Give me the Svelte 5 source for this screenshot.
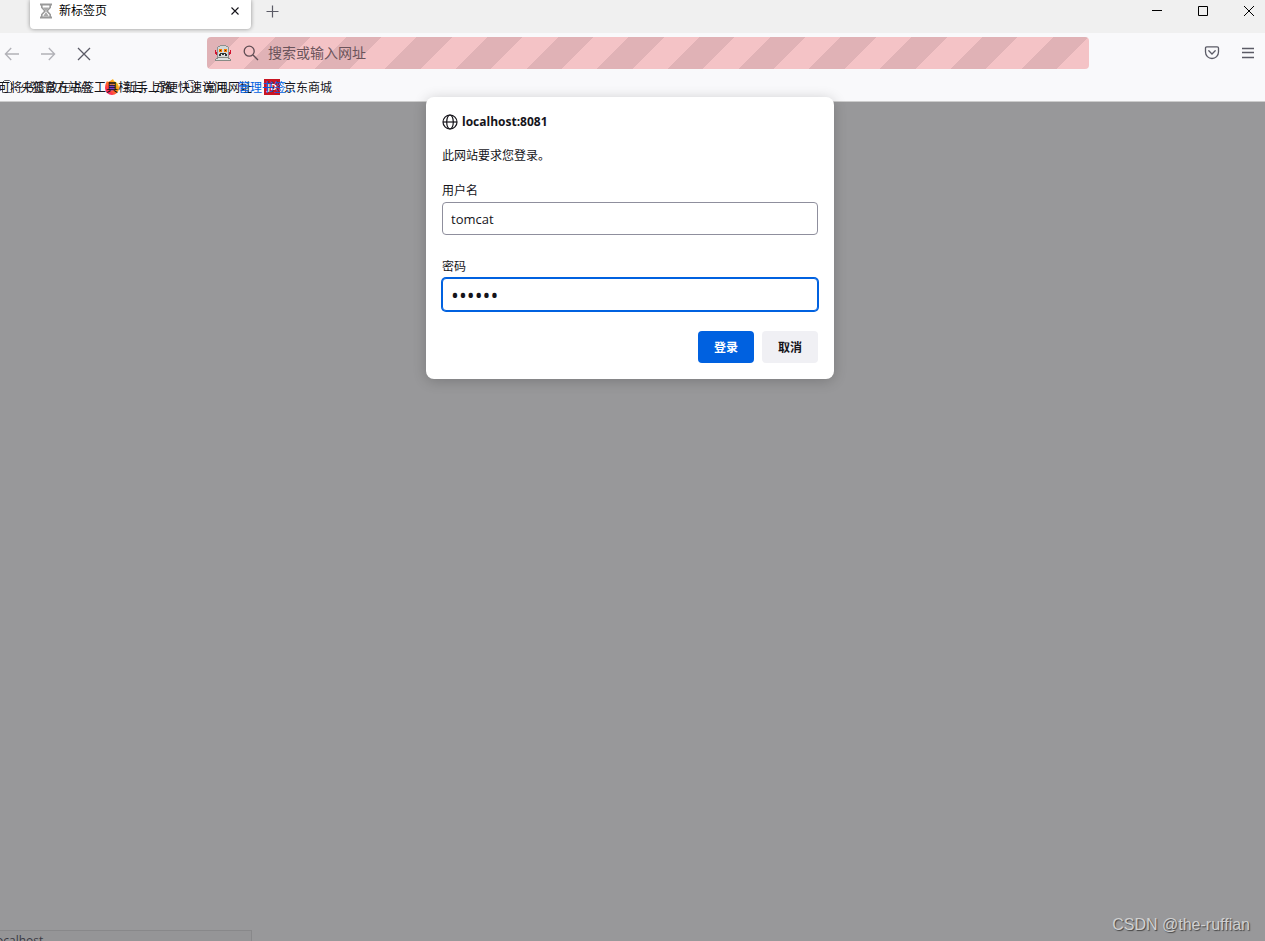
<script>
	let username = 'tomcat';
	let password = 'tomcat';

	function handleSubmit(event) {
		event.preventDefault();
	}
</script>

<div class="browser">
	<header class="tab-strip">
		<div class="tab">
			<svg class="tab-icon" width="14" height="16" viewBox="0 0 14 16">
				<path d="M1 1.5h12M1 14.5h12" stroke="#999" stroke-width="2" />
				<path d="M2.8 2v2.5L6 8l-3.2 3.5V14M11.2 2v2.5L8 8l3.2 3.5V14" fill="none" stroke="#999" stroke-width="1.6" />
				<path d="M4 4.5h6L7 8zM7 9l3 4.5H4z" fill="#aaa" />
			</svg>
			<span class="tab-title">新标签页</span>
			<button class="tab-close" aria-label="关闭标签页">
				<svg width="10" height="10" viewBox="0 0 10 10">
					<path d="M1.5 1.5l7 7M8.5 1.5l-7 7" stroke="#15141a" stroke-width="1.1" />
				</svg>
			</button>
		</div>
		<button class="new-tab" aria-label="打开新标签页">
			<svg width="13" height="13" viewBox="0 0 13 13">
				<path d="M6.5 .5v12M.5 6.5h12" stroke="#5b5b66" stroke-width="1.2" />
			</svg>
		</button>
		<div class="window-controls">
			<button aria-label="最小化">
				<svg width="10" height="10" viewBox="0 0 10 10"><path d="M0 4.5h10" stroke="#000" /></svg>
			</button>
			<button aria-label="最大化">
				<svg width="10" height="10" viewBox="0 0 10 10"><path d="M.5 .5h9v9h-9z" fill="none" stroke="#000" /></svg>
			</button>
			<button aria-label="关闭">
				<svg width="10" height="10" viewBox="0 0 10 10"><path d="M0 0l10 10M10 0L0 10" stroke="#000" /></svg>
			</button>
		</div>
	</header>

	<nav class="toolbar">
		<button class="tool nav faded" aria-label="后退">
			<svg width="16" height="16" viewBox="0 0 16 16"><path d="M15 8H1.5M7.2 2L1.4 8l5.8 6" /></svg>
		</button>
		<button class="tool nav faded" aria-label="前进">
			<svg width="16" height="16" viewBox="0 0 16 16"><path d="M1 8h13.5M8.8 2l5.8 6-5.8 6" /></svg>
		</button>
		<button class="tool nav" aria-label="停止">
			<svg width="16" height="16" viewBox="0 0 16 16"><path d="M2 2l12 12M14 2L2 14" /></svg>
		</button>
		<div class="spring"></div>
		<div class="url-bar">
			<svg class="robot" width="16" height="16" viewBox="0 0 16 16" shape-rendering="crispEdges">
				<path d="M5 0h6v1h2v1h1v10H2V2h1V1h2z" fill="#8b8f90" />
				<path d="M5 1h6v1h2v10H3V2h2z" fill="#d3d7d7" />
				<path d="M4 4h3v3H4zM9 4h3v3H9z" fill="#f57900" />
				<path d="M5 5h1v1H5zM10 5h1v1h-1z" fill="#4b2408" />
				<path d="M5 8h6v1h1v2h-2v-1H6v1H4V9h1z" fill="#2e3436" />
				<path d="M6 9h1v1H6zM9 9h1v1H9z" fill="#eee" />
				<path d="M0 5h1v2h1v3H1V9H0zM15 5h1v4h-1v1h-1V7h1z" fill="#d3122e" />
				<path d="M2 12h12v1h1v1h1v2H0v-2h1v-1h1z" fill="#888a85" />
				<path d="M3 13h10v1H3zM1 14h14v1H1z" fill="#dce0e0" />
			</svg>
			<svg class="search-icon" width="16" height="16" viewBox="0 0 16 16">
				<circle cx="6.2" cy="6.2" r="5" />
				<path d="M10 10l5 5" />
			</svg>
			<input type="text" aria-label="搜索或输入网址" placeholder="搜索或输入网址" />
		</div>
		<div class="spring"></div>
		<button class="tool" aria-label="保存到 Pocket">
			<svg width="16" height="16" viewBox="0 0 16 16">
				<path d="M2.8 1.8h10.4q1.3 0 1.3 1.3V7a6.5 6.5 0 0 1-13 0V3.1q0-1.3 1.3-1.3z" />
				<path d="M4.8 5.8L8 9l3.2-3.2" stroke-linecap="round" />
			</svg>
		</button>
		<button class="tool" aria-label="应用程序菜单">
			<svg width="16" height="16" viewBox="0 0 16 16"><path d="M2 3.5h12M2 7.5h12M2 12.5h12" /></svg>
		</button>
	</nav>

	<div class="bookmarks">
		<!-- the empty-toolbar hint and the bookmarks share one cell -->
		<div class="items">
			<a href="#mozilla" class="bookmark">
				<svg width="16" height="16" viewBox="0 0 16 16">
					<path d="M2.5 13.5v-10l2-2h5l2 2v10z" fill="none" stroke="#5b5b66" />
				</svg>
				<span class="name">火狐官方站点</span>
			</a>
			<a href="#start" class="bookmark">
				<svg width="16" height="16" viewBox="0 0 16 16">
					<defs>
						<linearGradient id="fox" x1="1" y1="0" x2="0" y2="1">
							<stop offset="0" stop-color="#ffe226" />
							<stop offset=".45" stop-color="#ff8a16" />
							<stop offset=".75" stop-color="#ff3050" />
							<stop offset="1" stop-color="#d81b9a" />
						</linearGradient>
					</defs>
					<path d="M2 4l1-2 1 1 2-1 3-2 1 2q5 2 5 7a7 7 0 0 1-14 0q0-3 1-5z" fill="url(#fox)" />
					<circle cx="8" cy="8.5" r="3" fill="#7b3fd0" />
				</svg>
				<span class="name">新手上路</span>
			</a>
			<a href="#common" class="bookmark">
				<svg width="16" height="16" viewBox="0 0 16 16">
					<path d="M2.5 11.5v-8l2-2h5l2 2v8l-2 2h-5z" fill="none" stroke="#5b5b66" />
				</svg>
				<span class="name">常用网址</span>
			</a>
			<a href="#jd" class="bookmark">
				<span class="jd">JD</span>
				<span class="name">京东商城</span>
			</a>
		</div>
		<p class="hint">可将书签放在书签工具栏上，方便快速访问。<a href="#manage">管理书签…</a></p>
	</div>

	<main class="page">
		<div class="status">localhost</div>
		<div class="watermark">CSDN @the-ruffian</div>
	</main>

	<div class="dialog-layer">
		<form class="dialog" onsubmit={handleSubmit}>
			<h1>
				<svg width="16" height="16" viewBox="0 0 16 16">
					<circle cx="8" cy="8" r="7" />
					<ellipse cx="8" cy="8" rx="3.3" ry="7" />
					<path d="M1 8h14" />
				</svg>
				localhost:8081
			</h1>
			<p class="message">此网站要求您登录。</p>
			<div class="field">
				<label for="username">用户名</label>
				<input id="username" type="text" bind:value={username} />
			</div>
			<div class="field">
				<label for="password">密码</label>
				<input id="password" class="active" type="password" bind:value={password} />
			</div>
			<div class="actions">
				<button type="submit" class="primary">登录</button>
				<button type="button">取消</button>
			</div>
		</form>
	</div>
</div>

<style>
	:global(body) {
		margin: 0;
	}

	.browser {
		position: relative;
		display: flex;
		flex-direction: column;
		min-height: 100vh;
		overflow: hidden;
		background: #f9f9fb;
		color: #15141a;
		font: 12px/16px 'Open Sans', 'Noto Sans CJK SC', sans-serif;
	}

	button {
		display: flex;
		align-items: center;
		justify-content: center;
		padding: 0;
		border: 0;
		background: none;
		color: inherit;
		font: inherit;
	}

	a {
		color: inherit;
		text-decoration: none;
	}

	/* Tab strip */
	.tab-strip {
		display: flex;
		align-items: flex-start;
		height: 33px;
		background: #f0f0f0;
	}

	.tab {
		display: flex;
		align-items: center;
		box-sizing: border-box;
		width: 221px;
		height: 29px;
		margin-left: 30px;
		padding: 0 10px 7px 9px;
		border-radius: 0 0 4px 4px;
		background: #fff;
		box-shadow: 0 0 4px rgba(0, 0, 0, 0.4);
	}

	.tab-title {
		flex: 1;
		margin-left: 6px;
		color: #000;
	}

	.tab-close {
		width: 12px;
		height: 16px;
	}

	.new-tab {
		width: 42px;
		height: 23px;
	}

	.window-controls {
		display: flex;
		margin-left: auto;
		margin-right: -7px;
	}

	.window-controls button {
		width: 46px;
		height: 22px;
	}

	/* Navigation toolbar */
	.toolbar {
		display: flex;
		align-items: center;
		height: 40px;
		margin: 0 -1px 0 -6px;
	}

	.tool {
		flex: none;
		box-sizing: border-box;
		width: 36px;
		height: 36px;
	}

	.nav {
		padding-top: 2px;
	}

	.tool svg {
		fill: none;
		stroke: #5b5b66;
		stroke-width: 1.3;
	}

	.faded {
		opacity: 0.45;
	}

	.spring {
		flex: 10;
	}

	.url-bar {
		flex: 84;
		display: flex;
		align-items: center;
		height: 32px;
		border-radius: 4px;
		background: repeating-linear-gradient(-45deg, #f4c3c6 0 23px, #e0b2b6 23px 48px, #f4c3c6 48px 50px);
	}

	.robot {
		margin-left: 8px;
	}

	.search-icon {
		margin: 0 9px 0 12px;
		fill: none;
		stroke: #5f4c53;
		stroke-width: 1.3;
	}

	.url-bar input {
		flex: 1;
		min-width: 0;
		padding: 0;
		border: 0;
		outline: 0;
		background: none;
		font: 14px/20px 'Open Sans', 'Noto Sans CJK SC', sans-serif;
	}

	.url-bar input::placeholder {
		color: #6b545b;
		opacity: 1;
	}

	/* Bookmarks toolbar */
	.bookmarks {
		display: grid;
		height: 28px;
		align-items: center;
		border-bottom: 1px solid #ccc;
		white-space: nowrap;
	}

	.items,
	.hint {
		grid-area: 1 / 1;
	}

	.items {
		display: flex;
		gap: 12px;
	}

	.bookmark {
		display: flex;
		align-items: center;
		gap: 4px;
	}

	.name,
	.hint {
		padding-top: 2px;
	}

	.jd {
		width: 16px;
		height: 16px;
		background: #c81623;
		color: #fff;
		font-size: 9px;
		font-weight: bold;
		text-align: center;
	}

	.hint {
		margin: 0 0 0 -2px;
	}

	.hint a {
		color: #0061e0;
	}

	/* Dimmed page */
	.page {
		position: relative;
		flex: 1;
		overflow: hidden;
		background: #98989a;
	}

	.status {
		position: absolute;
		left: -12px;
		bottom: -10px;
		box-sizing: border-box;
		width: 264px;
		height: 21px;
		padding: 2px 4px;
		border: 1px solid #88888a;
		background: #959597;
		color: #3a3a44;
	}

	.watermark {
		position: absolute;
		right: 15px;
		bottom: 6px;
		color: #d0d0d0;
		font: 16px/20px 'Liberation Sans', sans-serif;
		text-shadow: 1px 1px 1px #444;
	}

	/* Login dialog */
	.dialog-layer {
		position: absolute;
		top: 97px;
		left: 0;
		right: 5px;
		display: flex;
		justify-content: center;
	}

	.dialog {
		box-sizing: border-box;
		width: 408px;
		padding: 16px;
		border-radius: 8px;
		background: #fff;
		box-shadow: 0 2px 14px rgba(0, 0, 0, 0.2);
		line-height: 18px;
	}

	.dialog h1 {
		display: flex;
		align-items: center;
		gap: 4px;
		margin: 0 0 16px;
		font-size: 12px;
		font-weight: 700;
	}

	.dialog h1 svg {
		fill: none;
		stroke: #15141a;
		stroke-width: 1.2;
	}

	.message {
		margin: 0 0 17px;
	}

	.field {
		display: flex;
		flex-direction: column;
		gap: 2px;
		margin-bottom: 23px;
	}

	.field input {
		box-sizing: border-box;
		height: 33px;
		padding: 0 8px;
		border: 1px solid #8f8f9d;
		border-radius: 4px;
		outline: 0;
		background: #fff;
		color: #15141a;
		font: 13px/16px 'Open Sans', sans-serif;
	}

	.field .active {
		border-color: #0061e0;
		box-shadow: 0 0 0 1px #0061e0;
		font-size: 21px;
	}

	.actions {
		display: flex;
		justify-content: flex-end;
		gap: 8px;
		margin-top: -3px;
	}

	.actions button {
		box-sizing: border-box;
		width: 56px;
		height: 32px;
		padding-top: 2px;
		border-radius: 4px;
		background: #f0f0f4;
		font-weight: 700;
	}

	.actions .primary {
		background: #0061e0;
		color: #fff;
	}
</style>
